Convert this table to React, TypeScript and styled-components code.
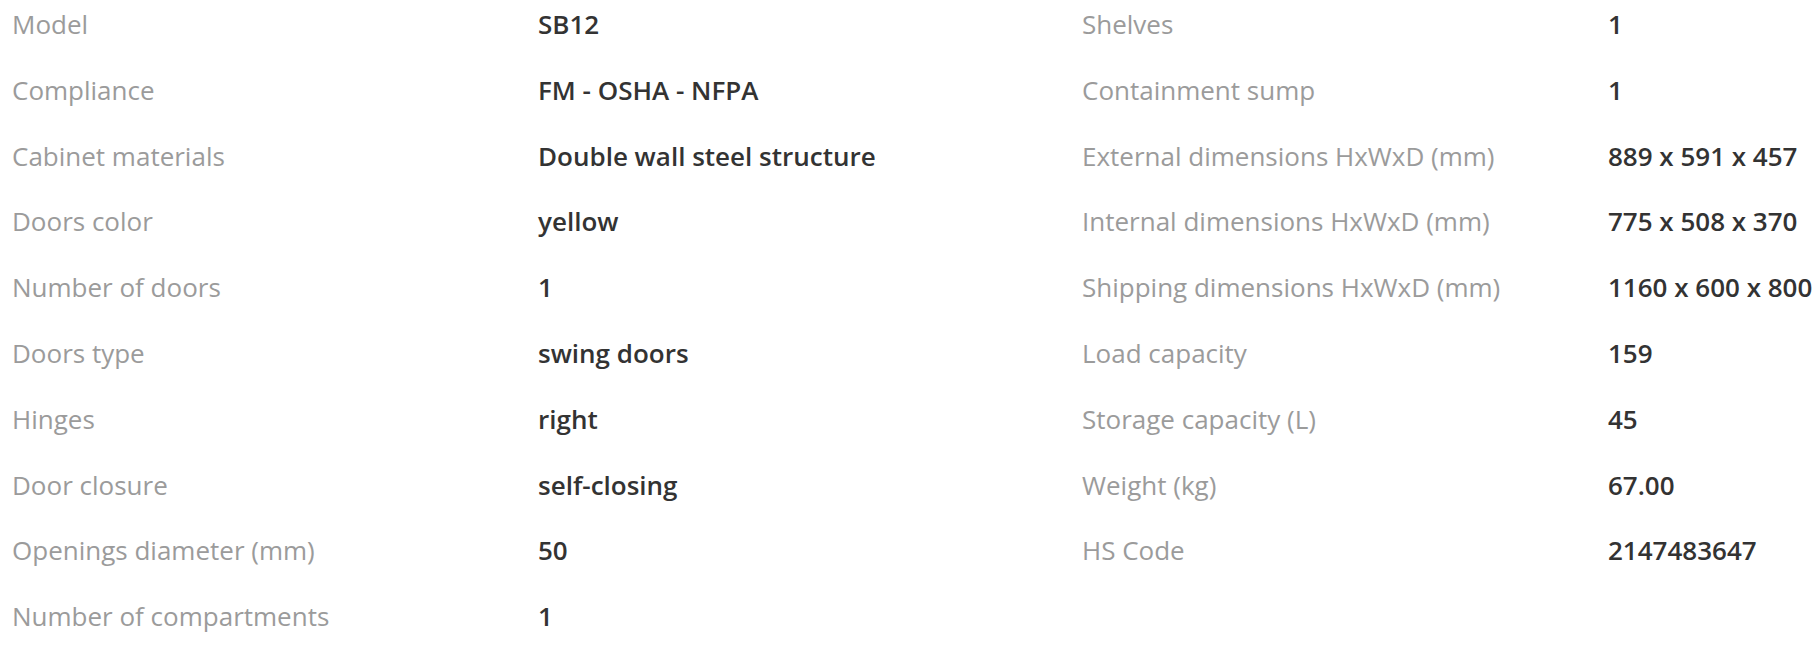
import React from 'react';
import styled, { createGlobalStyle } from 'styled-components';

const GlobalStyle = createGlobalStyle`
  html, body {
    margin: 0;
    padding: 0;
    background: #ffffff;
  }
  body {
    font-family: 'Open Sans', 'Noto Sans', sans-serif;
    -webkit-font-smoothing: antialiased;
  }
`;

const SpecGrid = styled.div`
  display: grid;
  grid-template-columns: 526px 544px 526px 1fr;
  padding: 0 0 0 12px;
  width: 1820px;
  box-sizing: border-box;
`;

const SpecTable = styled.dl`
  display: grid;
  grid-template-columns: subgrid;
  grid-column: span 2;
  grid-auto-rows: 65.8px;
  margin: 0;
  align-content: start;
`;

const Label = styled.dt`
  margin: 0;
  padding-top: 5px;
  font-size: 26px;
  line-height: 39px;
  font-weight: 400;
  color: #9b9b9b;
  white-space: nowrap;
`;

const Value = styled.dd`
  margin: 0;
  padding-top: 5px;
  font-size: 26px;
  line-height: 39px;
  font-weight: 600;
  color: #333333;
  white-space: nowrap;
`;

type Spec = [string, string];

const leftSpecs: Spec[] = [
  ['Model', 'SB12'],
  ['Compliance', 'FM - OSHA - NFPA'],
  ['Cabinet materials', 'Double wall steel structure'],
  ['Doors color', 'yellow'],
  ['Number of doors', '1'],
  ['Doors type', 'swing doors'],
  ['Hinges', 'right'],
  ['Door closure', 'self-closing'],
  ['Openings diameter (mm)', '50'],
  ['Number of compartments', '1'],
];

const rightSpecs: Spec[] = [
  ['Shelves', '1'],
  ['Containment sump', '1'],
  ['External dimensions HxWxD (mm)', '889 x 591 x 457'],
  ['Internal dimensions HxWxD (mm)', '775 x 508 x 370'],
  ['Shipping dimensions HxWxD (mm)', '1160 x 600 x 800'],
  ['Load capacity', '159'],
  ['Storage capacity (L)', '45'],
  ['Weight (kg)', '67.00'],
  ['HS Code', '2147483647'],
];

const SpecList: React.FC<{ specs: Spec[] }> = ({ specs }) => (
  <SpecTable>
    {specs.map(([label, value]) => (
      <React.Fragment key={label}>
        <Label>{label}</Label>
        <Value>{value}</Value>
      </React.Fragment>
    ))}
  </SpecTable>
);

export default function App() {
  return (
    <>
      <GlobalStyle />
      <SpecGrid>
        <SpecList specs={leftSpecs} />
        <SpecList specs={rightSpecs} />
      </SpecGrid>
    </>
  );
}
